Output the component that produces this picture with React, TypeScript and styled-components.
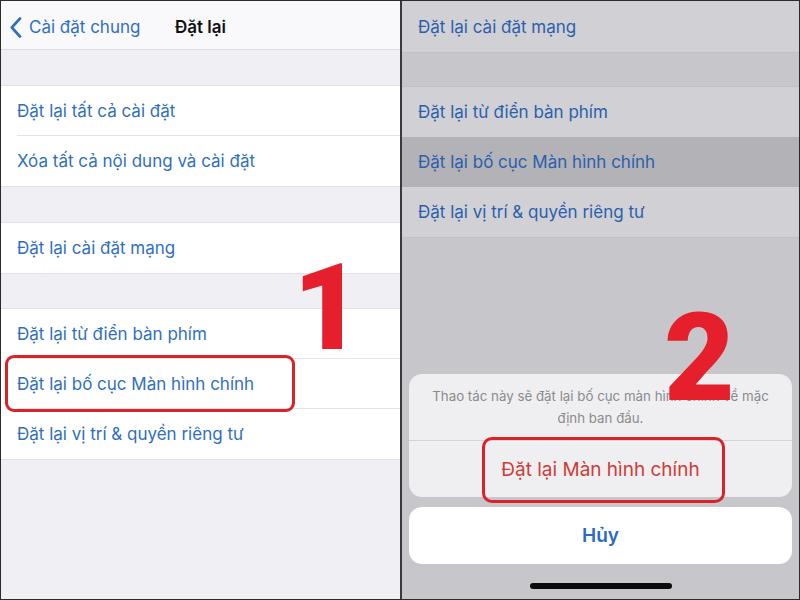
import React from "react";
import styled, { createGlobalStyle } from "styled-components";

const GlobalStyle = createGlobalStyle`
  html, body {
    margin: 0;
    padding: 0;
    background: #ffffff;
  }
  body {
    font-family: Inter, "Noto Sans", sans-serif;
  }
`;

const Frame = styled.div`
  width: 800px;
  height: 600px;
  box-sizing: border-box;
  border: 1px solid #2b2b2b;
  display: flex;
  overflow: hidden;
`;

const LeftPanel = styled.div`
  width: 399px;
  position: relative;
  background: #efeff4;
  display: flex;
  flex-direction: column;
`;

const Divider = styled.div`
  width: 2px;
  background: #3a3a3c;
`;

const RightPanel = styled.div`
  flex: 1;
  position: relative;
  background: #c6c6cb;
  display: flex;
  flex-direction: column;
`;

const NavBar = styled.div`
  height: 49px;
  padding-top: 4px;
  box-sizing: border-box;
  background: #f9f9fb;
  border-bottom: 1px solid #dcdce0;
  display: grid;
  grid-template-columns: 1fr auto 1fr;
  align-items: center;
`;

const BackButton = styled.div`
  display: flex;
  align-items: center;
  gap: 7px;
  padding-left: 9px;
  color: #2f6fc0;
  font-size: 17px;
`;

const Title = styled.div`
  font-size: 17px;
  font-weight: 600;
  color: #111;
`;

const Gap = styled.div<{ $h: number }>`
  height: ${(p) => p.$h}px;
`;

const Group = styled.div<{ $dim?: boolean; $top?: boolean }>`
  background: ${(p) => (p.$dim ? "#d1d1d5" : "#ffffff")};
  border-top: 1px solid
    ${(p) => (p.$top === false ? "transparent" : p.$dim ? "#c0c0c5" : "#e2e2e6")};
  border-bottom: 1px solid ${(p) => (p.$dim ? "#c0c0c5" : "#e2e2e6")};
`;

const Row = styled.div<{ $active?: boolean }>`
  position: relative;
  height: 50px;
  padding-left: 16px;
  display: flex;
  background: ${(p) => (p.$active ? "#b2b2b7" : "transparent")};
`;

const RowText = styled.div<{ $line?: boolean; $dim?: boolean }>`
  flex: 1;
  display: flex;
  align-items: center;
  font-size: 17px;
  color: ${(p) => (p.$dim ? "#2a60ab" : "#2f6fc0")};
  border-bottom: 1px solid
    ${(p) => (p.$line ? (p.$dim ? "#c3c3c8" : "#e4e4e8") : "transparent")};
`;

const Mark = styled.div<{ $l: number; $r: number; $t: number; $b: number; $rad: number }>`
  position: absolute;
  left: ${(p) => p.$l}px;
  right: ${(p) => p.$r}px;
  top: ${(p) => p.$t}px;
  bottom: ${(p) => p.$b}px;
  border: 3px solid #d9222a;
  border-radius: ${(p) => p.$rad}px;
  pointer-events: none;
`;

const Numeral = styled.div<{ $x: number; $y: number; $size: number }>`
  position: absolute;
  left: ${(p) => p.$x}px;
  top: ${(p) => p.$y}px;
  font-family: Roboto, sans-serif;
  font-weight: 900;
  font-size: ${(p) => p.$size}px;
  line-height: 1;
  color: #e61f2c;
  z-index: 5;
`;

const Sheet = styled.div`
  position: absolute;
  left: 7px;
  right: 7px;
  bottom: 0;
  display: flex;
  flex-direction: column;
  gap: 10px;
`;

const ActionGroup = styled.div`
  background: #efeff1;
  border-radius: 13px;
`;

const Message = styled.div`
  padding: 11px 12px 11px;
  text-align: center;
  font-size: 13.3px;
  line-height: 22px;
  color: #8a8a8f;
`;

const Action = styled.div`
  position: relative;
  height: 56px;
  border-top: 1px solid #d3d3d7;
  display: flex;
  align-items: center;
  justify-content: center;
  font-size: 19px;
  color: #cf3b36;
`;

const Cancel = styled.div`
  height: 57px;
  background: #ffffff;
  border-radius: 13px;
  display: flex;
  align-items: center;
  justify-content: center;
  font-size: 19px;
  font-weight: 600;
  color: #2a6ac0;
`;

const HomeArea = styled.div`
  height: 25px;
  display: flex;
  justify-content: center;
  padding-top: 9px;
  box-sizing: border-box;
`;

const HomeBar = styled.div`
  width: 142px;
  height: 6px;
  border-radius: 3px;
  background: #0b0b0b;
`;

const Chevron = () => (
  <svg width="12" height="21" viewBox="0 0 12 21">
    <path
      d="M10 1.5 L1.8 10.5 L10 19.5"
      fill="none"
      stroke="#2f6fc0"
      strokeWidth="2.6"
      strokeLinecap="round"
      strokeLinejoin="round"
    />
  </svg>
);

const App = () => {
  return (
    <>
      <GlobalStyle />
      <Frame>
        <LeftPanel>
          <NavBar>
            <BackButton>
              <Chevron />
              Cài đặt chung
            </BackButton>
            <Title>Đặt lại</Title>
            <div />
          </NavBar>
          <Gap $h={35} />
          <Group>
            <Row>
              <RowText $line>Đặt lại tất cả cài đặt</RowText>
            </Row>
            <Row>
              <RowText>Xóa tất cả nội dung và cài đặt</RowText>
            </Row>
          </Group>
          <Gap $h={35} />
          <Group>
            <Row>
              <RowText>Đặt lại cài đặt mạng</RowText>
            </Row>
          </Group>
          <Gap $h={34} />
          <Group>
            <Row>
              <RowText $line>Đặt lại từ điển bàn phím</RowText>
            </Row>
            <Row>
              <RowText $line>Đặt lại bố cục Màn hình chính</RowText>
              <Mark $l={4} $r={105} $t={-4} $b={-3} $rad={9} />
            </Row>
            <Row>
              <RowText>Đặt lại vị trí &amp; quyền riêng tư</RowText>
            </Row>
          </Group>
          <Numeral $x={292} $y={247} $size={120}>
            1
          </Numeral>
        </LeftPanel>
        <Divider />
        <RightPanel>
          <Group $dim $top={false}>
            <Row>
              <RowText $dim>Đặt lại cài đặt mạng</RowText>
            </Row>
          </Group>
          <Gap $h={33} />
          <Group $dim>
            <Row>
              <RowText $dim>Đặt lại từ điển bàn phím</RowText>
            </Row>
            <Row $active>
              <RowText $dim>Đặt lại bố cục Màn hình chính</RowText>
            </Row>
            <Row>
              <RowText $dim>Đặt lại vị trí &amp; quyền riêng tư</RowText>
            </Row>
          </Group>
          <Sheet>
            <ActionGroup>
              <Message>
                Thao tác này sẽ đặt lại bố cục màn hình chính về mặc định ban
                đầu.
              </Message>
              <Action>
                Đặt lại Màn hình chính
                <Mark $l={73} $r={67} $t={-4} $b={-6} $rad={10} />
              </Action>
            </ActionGroup>
            <Cancel>Hủy</Cancel>
            <HomeArea>
              <HomeBar />
            </HomeArea>
          </Sheet>
          <Numeral $x={262} $y={297} $size={122}>
            2
          </Numeral>
        </RightPanel>
      </Frame>
    </>
  );
};

export default App;
